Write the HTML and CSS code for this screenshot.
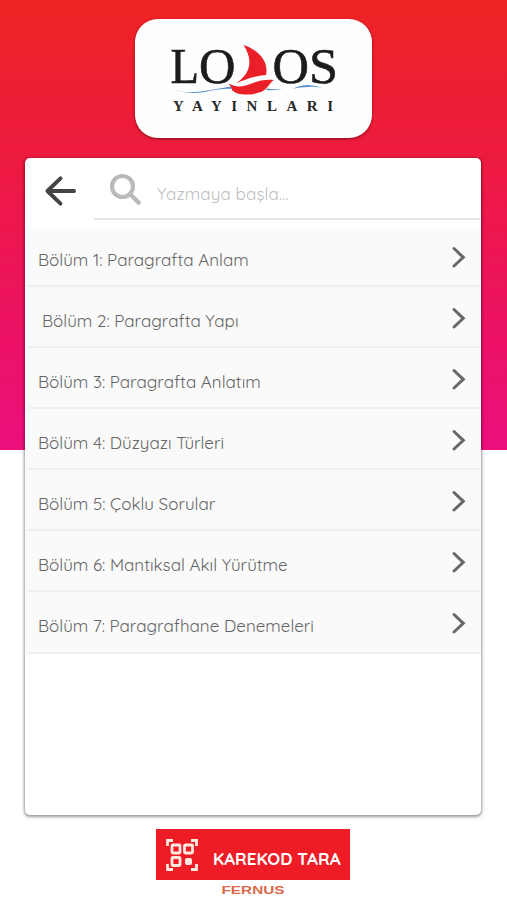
FILE: index.html
```html
<!DOCTYPE html>
<html lang="tr">
<head>
<meta charset="utf-8">
<title>Lodos Yayınları</title>
<link rel="stylesheet" href="styles.css">
</head>
<body>
<svg class="defs" width="0" height="0" aria-hidden="true">
  <symbol id="chevron" viewBox="0 0 16 24"><path d="M3 3.500 12.300 12.300 3 21"/></symbol>
</svg>
<main class="screen">
  <header class="brand">
    <svg class="logo" viewBox="135 19 237 119" role="img" aria-label="Lodos Yayınları">
      <g class="logo-name">
        <text x="170.500" y="82.500" textLength="28.500" lengthAdjust="spacingAndGlyphs">L</text>
        <text x="199" y="82.500" textLength="36.500" lengthAdjust="spacingAndGlyphs">O</text>
        <text x="272.500" y="82.500" textLength="36.500" lengthAdjust="spacingAndGlyphs">O</text>
        <text x="309" y="82.500" textLength="29" lengthAdjust="spacingAndGlyphs">S</text>
      </g>
      <path class="wave" d="M175 90Q184 93.500 203 91.200Q218 88.800 231 86.500L236 89Q222 88 205 92Q188 94.500 175 90Z"/>
      <path class="wave" d="M267 88.500Q274 90 282 88.800Q276 91 266 90Z"/>
      <path class="wave" d="M292.500 88.800Q300 85 308 85Q316 85.500 322 87.500Q312 86.500 308 87Q300 87 292.500 88.800Z"/>
      <path class="boat" d="M243.500 45C259 50 269 62 266 75C255 76 246 79 236 83.500C250 74 254 61 243.500 45Z"/>
      <path class="boat" d="M228.300 83.500Q236 87.500 244 86C254 83 260 79 274 80C269 83 267 91 259 92.500C249 96 236 95 232 90Q232 87 228.300 83.500Z"/>
      <text class="logo-sub" x="173" y="110.500" textLength="160">YAYINLARI</text>
    </svg>
  </header>

  <section class="panel">
    <div class="search">
      <svg class="back" viewBox="0 0 34 32"><path d="M31 16H4M17 3 3.500 16 17 29"/></svg>
      <div class="field">
        <svg class="lens" viewBox="0 0 34 34"><circle cx="13.500" cy="13.500" r="10.500"/><path d="m21.500 21.500 9.500 9.500"/></svg>
        <span class="hint">Yazmaya başla...</span>
      </div>
    </div>
    <ul class="list">
      <li><span>Bölüm 1: Paragrafta Anlam</span><svg><use href="#chevron"/></svg></li>
      <li><span class="indent">Bölüm 2: Paragrafta Yapı</span><svg><use href="#chevron"/></svg></li>
      <li><span>Bölüm 3: Paragrafta Anlatım</span><svg><use href="#chevron"/></svg></li>
      <li><span>Bölüm 4: Düzyazı Türleri</span><svg><use href="#chevron"/></svg></li>
      <li><span>Bölüm 5: Çoklu Sorular</span><svg><use href="#chevron"/></svg></li>
      <li><span>Bölüm 6: Mantıksal Akıl Yürütme</span><svg><use href="#chevron"/></svg></li>
      <li><span>Bölüm 7: Paragrafhane Denemeleri</span><svg><use href="#chevron"/></svg></li>
    </ul>
  </section>

  <footer class="footer">
    <div class="scan">
      <svg class="qr" viewBox="0 0 32 32">
        <path d="M1.500 7V1.500H7M25 1.500h5.500V7M30.500 25v5.500H25M7 30.500H1.500V25"/>
        <rect x="6" y="6" width="8" height="8" rx="1"/>
        <rect x="18.500" y="6" width="8" height="8" rx="1"/>
        <rect x="6" y="18.500" width="8" height="8" rx="1"/>
        <rect class="dot" x="19" y="19" width="7" height="7" rx="2"/>
      </svg>
      <span>KAREKOD TARA</span>
    </div>
    <svg class="maker" viewBox="0 0 64 11"><text x="0.500" y="9.500" textLength="63" lengthAdjust="spacingAndGlyphs">FERNUS</text></svg>
  </footer>
</main>
</body>
</html>
```
FILE: styles.css
```css
* { box-sizing: border-box; }
body { margin: 0; background: #fff; font-family: Quicksand, Lato, sans-serif; }
.defs { display: block; height: 0; }
.screen {
  height: 900px;
  display: flex;
  flex-direction: column;
  align-items: center;
  padding-top: 19px;
  background: linear-gradient(#ef2424 0, #ed1a40 160px, #ec1264 330px, #ec0f7d 450px, #fff 450px);
}
.brand {
  width: 237px;
  height: 119px;
  border-radius: 23px;
  background: #fefefe;
  box-shadow: 0 1px 3px rgba(70, 0, 0, .6);
}
.logo { display: block; width: 237px; height: 119px; }
.logo-name { font: 51px "Liberation Serif", serif; fill: #1c1c1c; stroke: #1c1c1c; stroke-width: .6; }
.logo-sub { font: bold 15px "Liberation Serif", serif; fill: #292929; }
.wave { fill: #5b92cc; }
.boat { fill: #ea2029; }

.panel {
  width: 456px;
  height: 657px;
  margin: 20px 1px 0 0;
  border-radius: 5px;
  background: #fff;
  box-shadow: 0 1px 3px 1px rgba(0, 0, 0, .4);
  overflow: hidden;
}
.search { height: 70px; display: flex; padding: 17px 1px 0 19px; }
.back { width: 33px; height: 32px; fill: none; stroke: #444; stroke-width: 4; stroke-linecap: round; stroke-linejoin: round; }
.field { flex: 1; height: 45px; margin-left: 17px; border-bottom: 2px solid #e4e4e4; display: flex; padding-left: 15px; }
.lens { width: 34px; height: 34px; margin-top: -2px; fill: none; stroke: #bababa; stroke-width: 4.200; }
.hint { margin: 8px 0 0 14px; font-size: 17px; line-height: 22px; letter-spacing: .1px; color: #bdbdbd; }

.list { list-style: none; margin: 0; padding: 0 1px 0 3px; background: #fafafa; }
.list li {
  height: 61.1px;
  display: flex;
  justify-content: space-between;
  padding: 0 13px 0 10px;
  border-bottom: 2px solid #f0f0f0;
}
.list li:first-child { height: 59px; }
.list li:first-child span { margin-top: 21px; }
.list li:first-child svg { margin-top: 17px; }
.list span { margin-top: 23px; font-size: 17px; line-height: 22px; color: #666; white-space: nowrap; }
.list .indent { padding-left: 4px; }
.list svg { width: 16px; height: 24px; margin-top: 19px; fill: none; stroke: #686868; stroke-width: 3; stroke-linecap: round; }

.footer { display: flex; flex-direction: column; align-items: center; margin: 14px 1px 0 0; }
.scan {
  width: 194px;
  height: 51px;
  display: flex;
  align-items: center;
  padding-left: 10px;
  background: #ee1c25;
  color: #fff;
  font-size: 17px;
  font-weight: bold;
}
.scan span { margin: 7px 0 0 15px; letter-spacing: .05px; white-space: nowrap; }
.qr { width: 32px; height: 32px; fill: none; stroke: #ffe9e0; stroke-width: 2.800; }
.qr .dot { fill: #ffe9e0; stroke: none; }
.maker { width: 64px; height: 11px; margin-top: 4px; font: bold 11.500px "Liberation Sans", sans-serif; fill: #d8694b; }
```
